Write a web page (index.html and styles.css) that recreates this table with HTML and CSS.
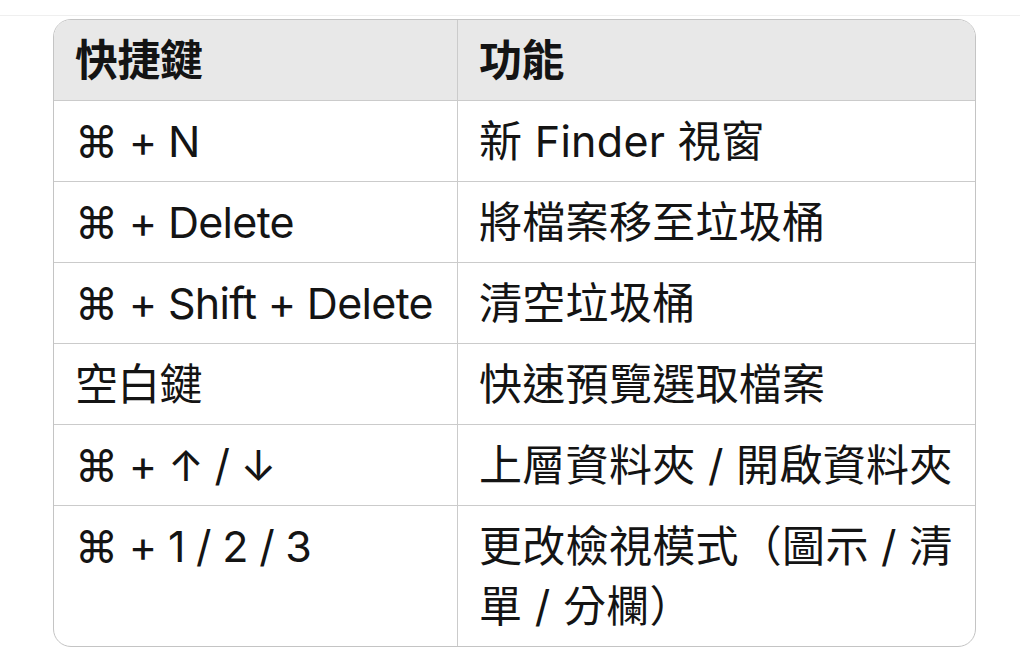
FILE: index.html
```html
<!DOCTYPE html>
<html lang="zh-Hant">
<head>
<meta charset="utf-8">
<link rel="stylesheet" href="styles.css">
</head>
<body>
<div class="topline"></div>
<div class="table">
  <div class="cell head c1">快捷鍵</div>
  <div class="cell head c2">功能</div>

  <div class="cell c1">⌘ + N</div>
  <div class="cell c2">新 Finder 視窗</div>

  <div class="cell c1">⌘ + Delete</div>
  <div class="cell c2">將檔案移至垃圾桶</div>

  <div class="cell c1">⌘ + Shift + Delete</div>
  <div class="cell c2">清空垃圾桶</div>

  <div class="cell c1">空白鍵</div>
  <div class="cell c2">快速預覽選取檔案</div>

  <div class="cell c1">⌘ + ↑ / ↓</div>
  <div class="cell c2">上層資料夾 / 開啟資料夾</div>

  <div class="cell c1 last">⌘ + 1 / 2 / 3</div>
  <div class="cell c2 last">更改檢視模式（圖示 / 清單 / 分欄）</div>
</div>
</body>
</html>
```

FILE: styles.css
```css
html, body {
  margin: 0;
  padding: 0;
  background: #ffffff;
}

body {
  font-family: Inter, "Noto Sans CJK TC", sans-serif;
  color: #141414;
}

.topline {
  height: 15px;
  border-bottom: 1px solid #efefef;
  margin-right: 4px;
}

.table {
  margin: 3px 0 0 53px;
  width: 923px;
  box-sizing: border-box;
  border: 1px solid #c4c4c4;
  border-radius: 18px;
  overflow: hidden;
  display: grid;
  grid-template-columns: 404px 1fr;
}

.cell {
  box-sizing: border-box;
  padding: 10px 16px 10px 21px;
  font-size: 43px;
  line-height: 60px;
  letter-spacing: 0.3px;
  border-bottom: 1px solid #cbcbcb;
}

.c1 {
  border-right: 1px solid #cbcbcb;
  letter-spacing: -0.7px;
}

.head {
  background: #e8e8e8;
  font-weight: 600;
  height: 81px;
  letter-spacing: -0.5px;
}

.last {
  border-bottom: none;
}
```
